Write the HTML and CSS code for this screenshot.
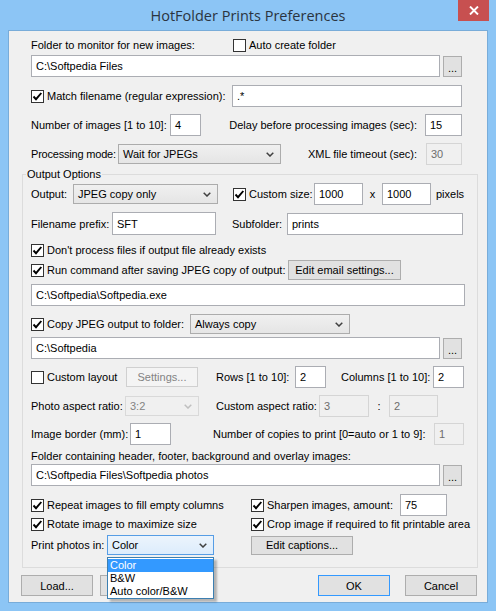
FILE: index.html
```html
<!DOCTYPE html>
<html>
<head>
<meta charset="utf-8">
<title>HotFolder Prints Preferences</title>
<link rel="stylesheet" href="styles.css">
</head>
<body>
<div class="win">
  <div class="titlebar">
    <div class="title">HotFolder Prints Preferences</div>
    <div class="close"><svg width="10" height="9" viewBox="0 0 10 9"><path d="M1 0.5L9 8.5M9 0.5L1 8.5" stroke="#fff" stroke-width="1.9"/></svg></div>
  </div>
  <div class="client">
    <div class="main">
      <div class="row h16 mt6">
        <span class="w202">Folder to monitor for new images:</span>
        <label class="chk"><span class="box"></span>Auto create folder</label>
      </div>
      <div class="row mt2">
        <div class="edit w409">C:\Softpedia Files</div>
        <div class="btn dots">...</div>
      </div>
      <div class="row mt8">
        <label class="chk w201"><span class="box on"><svg viewBox="0 0 11 11"><path d="M1.5 5.5L4 8.2L9.3 2"/></svg></span>Match filename (regular expression):</label>
        <div class="edit w230">.*</div>
      </div>
      <div class="row mt7">
        <span class="w139">Number of images [1 to 10]:</span>
        <div class="edit w31">4</div>
        <span class="push">Delay before processing images (sec):</span>
        <div class="edit w37 ml4">15</div>
      </div>
      <div class="row mt7">
        <span class="w87 tight">Processing mode:</span>
        <div class="select w163"><span>Wait for JPEGs</span><svg class="chev" viewBox="0 0 8 5"><path d="M0.7 0.7L4 4L7.3 0.7"/></svg></div>
        <span class="push">XML file timeout (sec):</span>
        <div class="edit off w36 ml5">30</div>
      </div>
    </div>

    <fieldset class="group">
      <legend>Output Options</legend>
      <div class="row mt2">
        <span class="w42">Output:</span>
        <div class="select w145"><span>JPEG copy only</span><svg class="chev" viewBox="0 0 8 5"><path d="M0.7 0.7L4 4L7.3 0.7"/></svg></div>
        <label class="chk w81 ml15"><span class="box on"><svg viewBox="0 0 11 11"><path d="M1.5 5.5L4 8.2L9.3 2"/></svg></span>Custom size:</label>
        <div class="edit w49">1000</div>
        <span class="w19 center">x</span>
        <div class="edit w49">1000</div>
        <span class="ml5">pixels</span>
      </div>
      <div class="row h23 mt7">
        <span class="w81">Filename prefix:</span>
        <div class="edit w104 h23">SFT</div>
        <span class="w55 ml16">Subfolder:</span>
        <div class="edit w176">prints</div>
      </div>
      <div class="row h16 mt7">
        <label class="chk"><span class="box on"><svg viewBox="0 0 11 11"><path d="M1.5 5.5L4 8.2L9.3 2"/></svg></span>Don't process files if output file already exists</label>
      </div>
      <div class="row h20 mt2">
        <label class="chk w257"><span class="box on"><svg viewBox="0 0 11 11"><path d="M1.5 5.5L4 8.2L9.3 2"/></svg></span>Run command after saving JPEG copy of output:</label>
        <div class="btn w113 h20">Edit email settings...</div>
      </div>
      <div class="row mt4">
        <div class="edit w434">C:\Softpedia\Softpedia.exe</div>
      </div>
      <div class="row mt7">
        <label class="chk w159"><span class="box on"><svg viewBox="0 0 11 11"><path d="M1.5 5.5L4 8.2L9.3 2"/></svg></span>Copy JPEG output to folder:</label>
        <div class="select w160"><span>Always copy</span><svg class="chev" viewBox="0 0 8 5"><path d="M0.7 0.7L4 4L7.3 0.7"/></svg></div>
      </div>
      <div class="row mt2">
        <div class="edit w409">C:\Softpedia</div>
        <div class="btn dots">...</div>
      </div>
      <div class="row mt7">
        <label class="chk w95"><span class="box"></span>Custom layout</label>
        <div class="btn off w72 h20">Settings...</div>
        <span class="w79 ml18">Rows [1 to 10]:</span>
        <div class="edit w31">2</div>
        <span class="w92 ml15">Columns [1 to 10]:</span>
        <div class="edit w31">2</div>
      </div>
      <div class="row mt7">
        <span class="w94">Photo aspect ratio:</span>
        <div class="select off w74"><span>3:2</span><svg class="chev" viewBox="0 0 8 5"><path d="M0.7 0.7L4 4L7.3 0.7"/></svg></div>
        <span class="w103 ml17">Custom aspect ratio:</span>
        <div class="edit off w50">3</div>
        <span class="w20 center">:</span>
        <div class="edit off w49">2</div>
      </div>
      <div class="row mt6">
        <span class="w99">Image border (mm):</span>
        <div class="edit w41">1</div>
        <span class="w221 ml42">Number of copies to print [0=auto or 1 to 9]:</span>
        <div class="edit off w30">1</div>
      </div>
      <div class="row h16 mt3">
        <span>Folder containing header, footer, background and overlay images:</span>
      </div>
      <div class="row">
        <div class="edit w409">C:\Softpedia Files\Softpedia photos</div>
        <div class="btn dots">...</div>
      </div>
      <div class="row h18 mt10">
        <label class="chk w220"><span class="box on"><svg viewBox="0 0 11 11"><path d="M1.5 5.5L4 8.2L9.3 2"/></svg></span>Repeat images to fill empty columns</label>
        <label class="chk w149"><span class="box on"><svg viewBox="0 0 11 11"><path d="M1.5 5.5L4 8.2L9.3 2"/></svg></span>Sharpen images, amount:</label>
        <div class="edit w47">75</div>
      </div>
      <div class="row h16 mt2">
        <label class="chk w220"><span class="box on"><svg viewBox="0 0 11 11"><path d="M1.5 5.5L4 8.2L9.3 2"/></svg></span>Rotate image to maximize size</label>
        <label class="chk"><span class="box on"><svg viewBox="0 0 11 11"><path d="M1.5 5.5L4 8.2L9.3 2"/></svg></span>Crop image if required to fit printable area</label>
      </div>
      <div class="row h20 mt3">
        <span class="w76">Print photos in:</span>
        <div class="select focus w107"><span>Color</span><svg class="chev" viewBox="0 0 8 5"><path d="M0.7 0.7L4 4L7.3 0.7"/></svg></div>
        <div class="btn w102 h19 ml37">Edit captions...</div>
      </div>
    </fieldset>

    <div class="footer">
      <div class="btn w72 h21">Load...</div>
      <div class="btn w72 h21 ml7"></div>
      <div class="btn default w72 h21 ml146">OK</div>
      <div class="btn w72 h21 ml15">Cancel</div>
    </div>

    <div class="droplist">
      <div class="item sel">Color</div>
      <div class="item">B&amp;W</div>
      <div class="item">Auto color/B&amp;W</div>
    </div>
  </div>
</div>
</body>
</html>
```

FILE: styles.css
```css
* { box-sizing: border-box; }
html, body { margin: 0; padding: 0; }
body {
  width: 496px;
  height: 611px;
  overflow: hidden;
  background: #8cc5f5;
  font-family: "Liberation Sans", Arial, sans-serif;
  font-size: 11px;
  color: #000;
}
.win {
  width: 496px;
  height: 611px;
  background: #8cc5f5;
}
.titlebar {
  height: 30px;
  position: relative;
  display: flex;
  align-items: center;
  justify-content: center;
}
.title {
  font-family: "Open Sans", "Noto Sans", sans-serif;
  font-size: 14.5px;
  color: #2a3440;
}
.close {
  position: absolute;
  right: 7px;
  top: 0;
  width: 31px;
  height: 21px;
  background: #c75050;
  display: flex;
  align-items: center;
  justify-content: center;
}
.client {
  margin: 0 8px;
  height: 573px;
  background: #f0f0f0;
  border: 1px solid #78acd9;
  position: relative;
}
.main { padding: 0 0 0 22px; }
.row {
  display: flex;
  align-items: center;
  height: 22px;
  white-space: nowrap;
}
.main .row { width: 431px; }
.group .row { width: 434px; }

.group {
  margin: 3px 0 0 13px;
  width: 456px;
  border: 1px solid #dcdcdc;
  padding: 0 0 12px 8px;
  min-width: 0;
}
.group legend {
  padding: 0 1px;
  margin-left: -5px;
  line-height: 13px;
}

.edit {
  height: 22px;
  border: 1px solid #abadb3;
  background: #fff;
  padding: 0 0 0 4px;
  display: flex;
  align-items: center;
  flex: 0 0 auto;
}
.edit.off {
  background: #f0f0f0;
  border-color: #d5d5d5;
  color: #6d6d6d;
}
.select {
  height: 20px;
  border: 1px solid #acacac;
  background: linear-gradient(#f0f0f0, #e5e5e5);
  padding: 0 0 0 4px;
  display: flex;
  align-items: center;
  justify-content: space-between;
  flex: 0 0 auto;
}
.select .chev {
  width: 8px;
  height: 5px;
  margin-right: 6px;
  fill: none;
  stroke: #404040;
  stroke-width: 1.5;
}
.select.off {
  background: #f0f0f0;
  border-color: #d9d9d9;
  color: #838383;
}
.select.off .chev { stroke: #bfbfbf; }
.select.focus {
  background: linear-gradient(#ecf4fc, #dcecfc);
  border-color: #569de5;
}
.btn {
  height: 20px;
  border: 1px solid #adadad;
  background: #e1e1e1;
  display: flex;
  align-items: center;
  justify-content: center;
  flex: 0 0 auto;
}
.btn.off {
  background: #f4f4f4;
  border-color: #d0d0d0;
  color: #838383;
}
.btn.default { border-color: #3399ff; }
.dots {
  width: 19px;
  height: 21px;
  margin-left: 3px;
  padding-top: 4px;
}

.chk {
  display: flex;
  align-items: center;
  flex: 0 0 auto;
}
.box {
  width: 13px;
  height: 13px;
  border: 1px solid #333;
  background: #fff;
  margin-right: 3px;
  display: flex;
  align-items: center;
  justify-content: center;
  flex: 0 0 auto;
}
.box svg {
  width: 11px;
  height: 11px;
  fill: none;
  stroke: #000;
  stroke-width: 1.9;
}

.footer {
  display: flex;
  padding: 7px 0 0 12px;
}

.droplist {
  position: absolute;
  left: 98px;
  top: 526px;
  width: 107px;
  height: 42px;
  background: #fff;
  border: 1px solid #3c7fb1;
  box-shadow: 3px 3px 2px rgba(0, 0, 0, 0.25);
  padding-top: 1px;
}
.droplist .item {
  height: 13px;
  line-height: 13px;
  padding-left: 2px;
  white-space: nowrap;
}
.droplist .item.sel {
  background: #3399ff;
  color: #fff;
}

.push { margin-left: auto; margin-right: 4px; }
.center { text-align: center; }
.tight { letter-spacing: -0.2px; }
span[class*="w"] { flex: 0 0 auto; }

.h16 { height: 16px; }
.h18 { height: 18px; }
.h19 { height: 19px; }
.h20 { height: 20px; }
.h21 { height: 21px; }
.h23 { height: 23px; }

.mt2 { margin-top: 2px; }
.mt3 { margin-top: 3px; }
.mt4 { margin-top: 4px; }
.mt6 { margin-top: 6px; }
.mt7 { margin-top: 7px; }
.mt8 { margin-top: 8px; }
.mt10 { margin-top: 10px; }

.ml4 { margin-left: 4px; }
.ml5 { margin-left: 5px; }
.ml7 { margin-left: 7px; }
.ml15 { margin-left: 15px; }
.ml16 { margin-left: 16px; }
.ml17 { margin-left: 17px; }
.ml18 { margin-left: 18px; }
.ml37 { margin-left: 37px; }
.ml42 { margin-left: 42px; }
.ml146 { margin-left: 146px; }

.w19 { width: 19px; }
.w20 { width: 20px; }
.w30 { width: 30px; }
.w31 { width: 31px; }
.w36 { width: 36px; }
.w37 { width: 37px; }
.w41 { width: 41px; }
.w42 { width: 42px; }
.w47 { width: 47px; }
.w49 { width: 49px; }
.w50 { width: 50px; }
.w55 { width: 55px; }
.w72 { width: 72px; }
.w74 { width: 74px; }
.w76 { width: 76px; }
.w79 { width: 79px; }
.w81 { width: 81px; }
.w87 { width: 87px; }
.w92 { width: 92px; }
.w94 { width: 94px; }
.w95 { width: 95px; }
.w99 { width: 99px; }
.w102 { width: 102px; }
.w103 { width: 103px; }
.w104 { width: 104px; }
.w107 { width: 107px; }
.w113 { width: 113px; }
.w139 { width: 139px; }
.w145 { width: 145px; }
.w149 { width: 149px; }
.w159 { width: 159px; }
.w160 { width: 160px; }
.w163 { width: 163px; }
.w176 { width: 176px; }
.w201 { width: 201px; }
.w202 { width: 202px; }
.w220 { width: 220px; }
.w221 { width: 221px; }
.w230 { width: 230px; }
.w257 { width: 257px; }
.w409 { width: 409px; }
.w434 { width: 434px; }
```
